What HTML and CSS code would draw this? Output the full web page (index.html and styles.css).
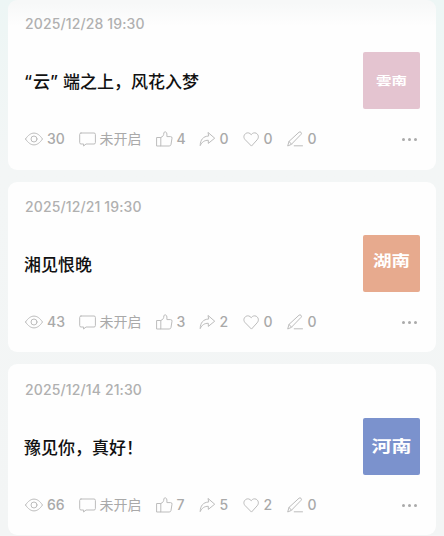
FILE: index.html
```html
<!DOCTYPE html>
<html lang="zh-CN">
  <head>
    <meta charset="UTF-8" />
    <meta name="viewport" content="width=device-width, initial-scale=1.0" />
    <title>文章列表</title>
    <link rel="stylesheet" href="styles.css">
  </head>
  <body>
    <!-- shared icons -->
    <svg class="sprite" width="0" height="0">
      <symbol id="eye" viewBox="0 0 18 18">
        <path d="M.5 9C3.200 5 6 3.100 9 3.100S14.800 5 17.500 9C14.800 13 12 14.900 9 14.900S3.200 13 .5 9Z" />
        <circle cx="9" cy="9" r="3" />
      </symbol>
      <symbol id="comment" viewBox="0 0 18 18">
        <path d="M2 3H15Q16.400 3 16.400 4.400V12.600Q16.400 14 15 14H7L4.600 16V14H2Q.7 14 .7 12.600V4.400Q.7 3 2 3Z" />
      </symbol>
      <symbol id="like" viewBox="0 0 18 18">
        <path d="M1 7.500H4.800V16H1ZM4.800 7.500C7 7 7.800 5 7.900 2.900C8 1.300 10.900 1.400 10.900 4V6.600H14.600Q16.200 6.600 16 8.200L15 14.400Q14.700 16 13.200 16H4.800" />
      </symbol>
      <symbol id="share" viewBox="0 0 18 18">
        <path d="M9.300 2.700L15.700 8.200L9.300 13.400V10.300C5.700 10.200 3 11.800 1.200 15.600C1.300 10 4 6.300 9.300 6Z" />
      </symbol>
      <symbol id="heart" viewBox="0 0 18 18">
        <path d="M8.200 15.800L2 9.500C-1.600 5.400 4.500-.1 8.200 4.700C11.900-.1 18 5.400 14.400 9.500Z" />
      </symbol>
      <symbol id="edit" viewBox="0 0 18 18">
        <path d="M.8 15.600L2 11.400L12 2.200Q13 1.400 14 2.300T14 4.400L4.500 14.200ZM2 11.400L4.500 14.200M7.200 15.800H15.500" />
      </symbol>
    </svg>

    <main class="list">
      <article class="card card-first">
        <time class="date">2025/12/28 19:30</time>
        <div class="content">
          <h2 class="title"><span class="quote quote-open">“</span>云<span class="quote quote-close">”</span>端之上，风花入梦</h2>
          <div class="cover cover-pink"><span>雲南</span></div>
        </div>
        <footer class="stats">
          <span class="stat stat-view"><svg class="icon"><use href="#eye" /></svg>30</span>
          <span class="stat"><svg class="icon"><use href="#comment" /></svg><span class="status">未开启</span></span>
          <span class="stat"><svg class="icon"><use href="#like" /></svg>4</span>
          <span class="stat"><svg class="icon"><use href="#share" /></svg>0</span>
          <span class="stat"><svg class="icon"><use href="#heart" /></svg>0</span>
          <span class="stat"><svg class="icon"><use href="#edit" /></svg>0</span>
          <span class="more"><i></i><i></i><i></i></span>
        </footer>
      </article>

      <article class="card">
        <time class="date">2025/12/21 19:30</time>
        <div class="content">
          <h2 class="title">湘见恨晚</h2>
          <div class="cover cover-orange"><span>湖南</span></div>
        </div>
        <footer class="stats">
          <span class="stat stat-view"><svg class="icon"><use href="#eye" /></svg>43</span>
          <span class="stat"><svg class="icon"><use href="#comment" /></svg><span class="status">未开启</span></span>
          <span class="stat"><svg class="icon"><use href="#like" /></svg>3</span>
          <span class="stat"><svg class="icon"><use href="#share" /></svg>2</span>
          <span class="stat"><svg class="icon"><use href="#heart" /></svg>0</span>
          <span class="stat"><svg class="icon"><use href="#edit" /></svg>0</span>
          <span class="more"><i></i><i></i><i></i></span>
        </footer>
      </article>

      <article class="card card-last">
        <time class="date">2025/12/14 21:30</time>
        <div class="content">
          <h2 class="title">豫见你，真好！</h2>
          <div class="cover cover-blue"><span>河南</span></div>
        </div>
        <footer class="stats">
          <span class="stat stat-view"><svg class="icon"><use href="#eye" /></svg>66</span>
          <span class="stat"><svg class="icon"><use href="#comment" /></svg><span class="status">未开启</span></span>
          <span class="stat"><svg class="icon"><use href="#like" /></svg>7</span>
          <span class="stat"><svg class="icon"><use href="#share" /></svg>5</span>
          <span class="stat"><svg class="icon"><use href="#heart" /></svg>2</span>
          <span class="stat"><svg class="icon"><use href="#edit" /></svg>0</span>
          <span class="more"><i></i><i></i><i></i></span>
        </footer>
      </article>
    </main>
  </body>
</html>
```
FILE: styles.css
```css
* {
  box-sizing: border-box;
}

body {
  margin: 0;
  height: 536px;
  overflow: hidden;
  background: linear-gradient(#edf6f5, #f3f6f6 170px, #f3f5f5);
  font-family: Inter, "Noto Sans CJK SC", sans-serif;
}

.sprite {
  display: none;
}

.list {
  display: flex;
  flex-direction: column;
  gap: 12px;
  padding: 0 8px;
}

.card {
  height: 170px;
  padding: 17px 16px 0 17px;
  background: #fefefe;
  border-radius: 9px;
}

.card-first {
  padding-top: 16px;
  background: linear-gradient(#f7f8f8 3px, #fefefe 26px);
}

.card-last {
  height: 171px;
  padding-top: 18px;
}

.date {
  display: block;
  height: 16px;
  line-height: 16px;
  font-size: 14px;
  font-weight: 500;
  letter-spacing: 0.13px;
  color: #b0b0b0;
}

.content {
  display: flex;
  justify-content: space-between;
  align-items: center;
  height: 57px;
  margin-top: 20px;
}

.title {
  margin: 0;
  padding-top: 2px;
  margin-left: -1px;
  font-size: 17px;
  line-height: 24px;
  font-weight: 500;
  color: #111;
}

.quote {
  display: inline-block;
  width: 9px;
}

.quote-close {
  width: 13px;
}

.cover {
  display: flex;
  justify-content: center;
  align-items: center;
  width: 57px;
  height: 57px;
  border-radius: 2px;
  color: #fff;
  font-family: "Noto Sans CJK SC", sans-serif;
  font-weight: 700;
}

.cover span {
  line-height: 20px;
}

.cover-pink {
  background: #e4c4d0;
  font-size: 15.5px;
}

.cover-pink span {
  transform: translateY(-1px) scaleY(0.75);
}

.cover-orange {
  background: #e7aa8e;
  font-size: 18.5px;
}

.cover-orange span {
  transform: translateY(-5px) scaleY(0.82);
}

.cover-blue {
  background: #7b92cd;
  font-size: 20px;
}

.cover-blue span {
  transform: translateY(-1px) scaleY(0.8);
}

.stats {
  display: grid;
  grid-template-columns: 54px 77px 43px 44px 44px 44px 1fr;
  align-items: center;
  height: 20px;
  margin-top: 20px;
  font-size: 14px;
  font-weight: 500;
  color: #a9a9a9;
}

.stat {
  display: flex;
  align-items: center;
  gap: 2.4px;
  line-height: 20px;
  white-space: nowrap;
}

.stat-view {
  gap: 4px;
}

.icon {
  width: 18px;
  height: 18px;
  fill: none;
  stroke: #bcbcbc;
  stroke-width: 1;
  stroke-linejoin: round;
  stroke-linecap: round;
}

.status {
  font-weight: 400;
}

.more {
  display: flex;
  gap: 3px;
  justify-content: flex-end;
  padding-right: 3px;
}

.more i {
  width: 3px;
  height: 3px;
  border-radius: 50%;
  background: #aaa;
}
```
